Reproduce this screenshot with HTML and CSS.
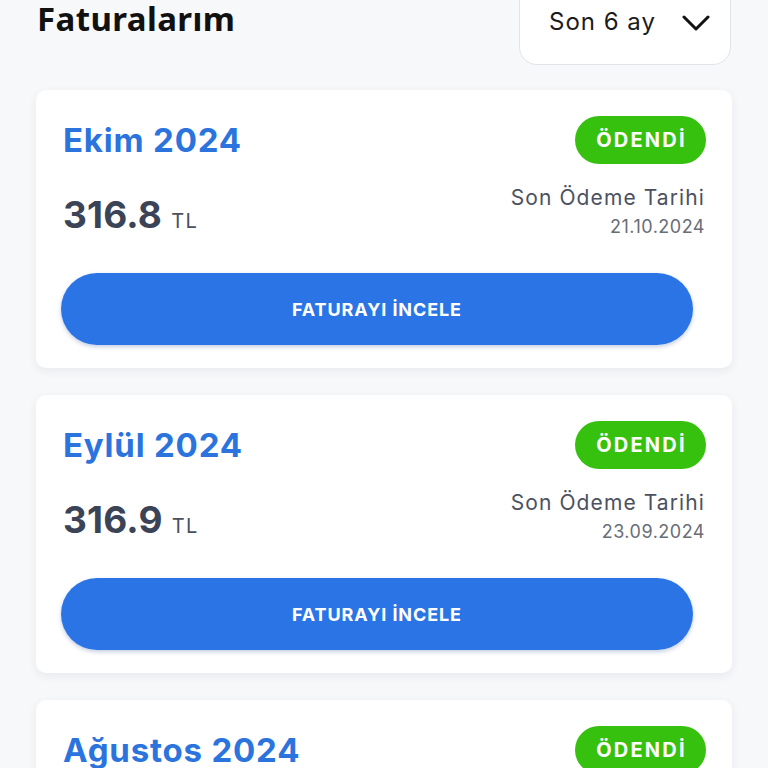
FILE: index.html
```html
<!DOCTYPE html>
<html lang="tr">
<head>
<meta charset="utf-8">
<title>Faturalarım</title>
<link rel="stylesheet" href="styles.css">
</head>
<body>
<div class="page">
  <header class="header">
    <h1 class="title">Faturalarım</h1>
    <div class="dropdown">
      <span class="dropdown-label">Son 6 ay</span>
      <svg class="chevron" width="28" height="16" viewBox="0 0 28 16"><polyline points="2,2 14,14 26,2" fill="none" stroke="#111" stroke-width="3" stroke-linecap="round" stroke-linejoin="round"/></svg>
    </div>
  </header>

  <section class="card">
    <div class="card-top">
      <h2 class="month">Ekim 2024</h2>
      <span class="badge">ÖDENDİ</span>
    </div>
    <div class="card-mid">
      <div class="amount"><span class="value">316.8</span><span class="unit">TL</span></div>
      <div class="due">
        <div class="due-label">Son Ödeme Tarihi</div>
        <div class="due-date">21.10.2024</div>
      </div>
    </div>
    <button class="btn">FATURAYI İNCELE</button>
  </section>

  <section class="card">
    <div class="card-top">
      <h2 class="month">Eylül 2024</h2>
      <span class="badge">ÖDENDİ</span>
    </div>
    <div class="card-mid">
      <div class="amount"><span class="value">316.9</span><span class="unit">TL</span></div>
      <div class="due">
        <div class="due-label">Son Ödeme Tarihi</div>
        <div class="due-date">23.09.2024</div>
      </div>
    </div>
    <button class="btn">FATURAYI İNCELE</button>
  </section>

  <section class="card">
    <div class="card-top">
      <h2 class="month">Ağustos 2024</h2>
      <span class="badge">ÖDENDİ</span>
    </div>
    <div class="card-mid">
      <div class="amount"><span class="value">317.2</span><span class="unit">TL</span></div>
      <div class="due">
        <div class="due-label">Son Ödeme Tarihi</div>
        <div class="due-date">22.08.2024</div>
      </div>
    </div>
    <button class="btn">FATURAYI İNCELE</button>
  </section>
</div>
</body>
</html>
```

FILE: styles.css
```css
* { box-sizing: border-box; }
html, body {
  margin: 0;
  padding: 0;
  background: #f7f8fa;
  height: 100%;
  overflow: hidden;
}
body {
  font-family: Inter, "Noto Sans", sans-serif;
  color: #3b4356;
}
.page {
  display: flex;
  flex-direction: column;
  gap: 27px;
}
.header {
  display: flex;
  justify-content: space-between;
  align-items: flex-start;
  padding: 0 37px 0 37px;
  height: 65px;
  margin-bottom: -2px;
}
.title {
  margin: 0;
  font-family: "Noto Sans", sans-serif;
  font-weight: 700;
  font-size: 33px;
  line-height: 38px;
  color: #111;
  letter-spacing: 0.4px;
}
.dropdown {
  margin-top: -20px;
  height: 85px;
  width: 212px;
  background: #fff;
  border: 1.5px solid #e3e4e8;
  border-radius: 18px;
  display: flex;
  align-items: flex-start;
  padding: 26px 20px 0 29px;
  justify-content: space-between;
}
.dropdown-label {
  font-family: Inter, sans-serif;
  font-size: 24px;
  line-height: 30px;
  font-weight: 400;
  color: #1b1b1b;
  letter-spacing: 1px;
}
.chevron {
  margin-top: 8px;
}
.card {
  margin: 0 36px;
  background: #fff;
  border-radius: 10px;
  box-shadow: 0 3px 10px rgba(30, 40, 60, 0.07);
  padding: 26px 26px 23px 27px;
  display: flex;
  flex-direction: column;
}
.card-top {
  display: flex;
  justify-content: space-between;
  align-items: center;
  height: 48px;
}
.month {
  margin: 0;
  font-size: 33px;
  font-weight: 700;
  color: #2b74de;
  letter-spacing: 0.8px;
  line-height: 40px;
}
.badge {
  background: #36c10f;
  color: #fff;
  font-weight: 700;
  font-size: 20px;
  letter-spacing: 2.2px;
  height: 48px;
  width: 131px;
  border-radius: 24px;
  display: flex;
  align-items: center;
  justify-content: center;
  padding-left: 2px;
}
.card-mid {
  display: flex;
  justify-content: space-between;
  align-items: flex-end;
  margin-top: 18px;
  height: 56px;
}
.amount {
  display: flex;
  align-items: baseline;
  gap: 9px;
  padding-bottom: 1px;
}
.value {
  font-size: 37px;
  font-weight: 700;
  color: #3b4356;
  line-height: 44px;
  letter-spacing: 0.2px;
}
.unit {
  font-size: 20px;
  font-weight: 400;
  color: #4a505c;
  letter-spacing: 1.5px;
}
.due {
  text-align: right;
  padding-right: 1px;
  margin-bottom: -4px;
}
.due-label {
  font-size: 21px;
  line-height: 28px;
  color: #4b5160;
  letter-spacing: 1.1px;
}
.due-date {
  font-size: 18px;
  line-height: 30px;
  color: #686d77;
  letter-spacing: 0.5px;
}
.btn {
  margin: 35px 13px 0 -2px;
  height: 72px;
  border: none;
  border-radius: 36px;
  background: #2b74e6;
  color: #fff;
  font-family: Inter, sans-serif;
  font-weight: 700;
  font-size: 18px;
  letter-spacing: 0.9px;
  box-shadow: 0 2px 4px rgba(20, 60, 140, 0.25);
  cursor: pointer;
}
```
